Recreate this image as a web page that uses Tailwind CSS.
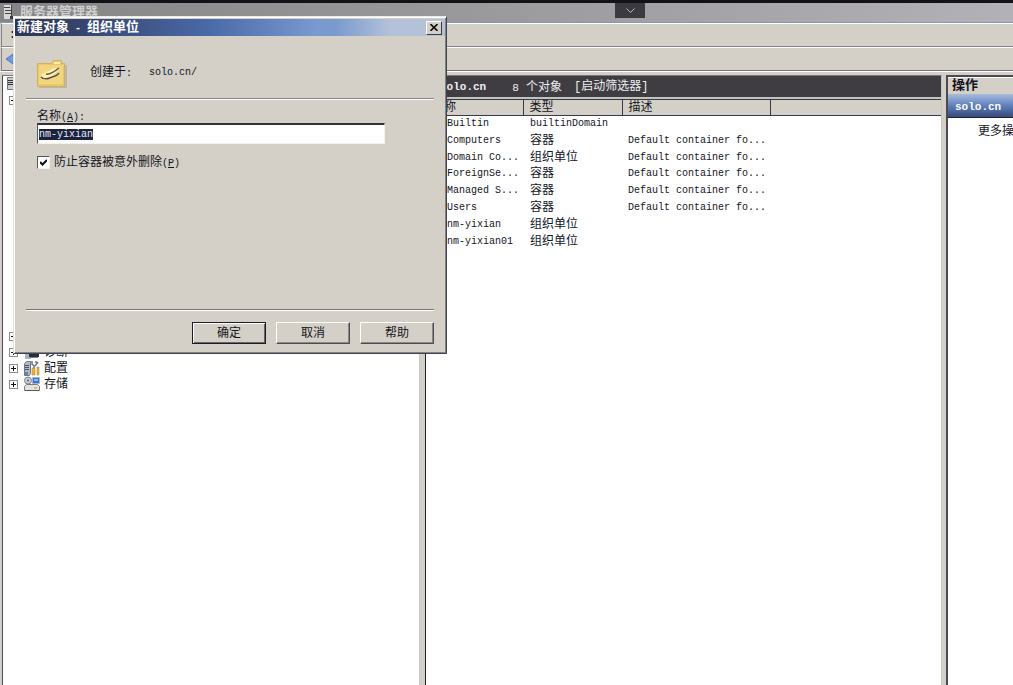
<!DOCTYPE html>
<html lang="zh-CN">
<head>
<meta charset="utf-8">
<title>服务器管理器</title>
<script src="https://cdn.jsdelivr.net/npm/@tailwindcss/browser@4"></script>
</head>
<body class="relative flex h-screen flex-col overflow-hidden bg-[#d4d0c8] font-['Liberation_Mono','Noto_Sans_CJK_SC',monospace] text-xs leading-4 text-[#14141c]">

<header class="relative flex h-[23px] shrink-0 items-center gap-1 border-t-3 border-b border-t-[#111319] border-b-[#8497b5] bg-linear-to-r from-[#858585] via-[#9b9b9e] to-[#b2b1b7] pl-1">
  <svg class="h-4 w-3 shrink-0" viewBox="0 0 12 16" aria-hidden="true"><path fill="#d8d8d8" d="M0 0h7v14H0z"/><path stroke="#444" d="M0 2.500h6M1 5.500h6M1 8.500h6M7.500 0v13"/><path fill="#333a55" d="M6 11h5v3H6z"/></svg>
  <h1 class="text-[13px] leading-4 font-bold whitespace-nowrap text-[#cfcfcf]">服务器管理器</h1>
  <button aria-label="展开" class="absolute top-0 left-[615px] flex h-[15px] w-[30px] items-center justify-center bg-[#3b3a40]">
    <svg class="h-[5px] w-[9px]" viewBox="0 0 9 5" fill="none" stroke="#b8b8bd" aria-hidden="true"><path d="M.5.5l4 4 4-4"/></svg>
  </button>
</header>
<nav class="ml-px flex h-6 shrink-0 items-center border-y border-l border-t-white border-b-[#858585] border-l-[#858585] pl-[7px]">
  <span aria-hidden="true" class="font-bold">:</span>
</nav>
<div class="ml-px flex h-6 shrink-0 items-center border-y border-l border-t-white border-b-[#77717a] border-l-[#858585] pl-[3px]">
  <button aria-label="后退"><svg class="h-3 w-3" viewBox="0 0 12 12" aria-hidden="true"><path fill="#6e9be0" stroke="#557ab8" d="M1 6l7-5v3h4v4H8v3z"/></svg></button>
</div>

<main class="flex min-h-0 flex-1 border-t border-white pt-[3px]">
  <aside class="ml-0.5 w-[418px] shrink-0 border-t border-r border-l border-t-[#77777c] border-r-[#c8c6c1] border-l-[#4b4e62] bg-white">
    <ul class="flex flex-col">
      <li class="flex h-4 items-center pl-1"><svg class="h-[14px] w-3" viewBox="0 0 12 14" aria-hidden="true"><path fill="#c9ccd0" stroke="#777" d="M.5.5h8v12h-8z"/><path stroke="#333" d="M1 3.500h7M1 5.500h7M1 7.500h7"/></svg></li>
      <li class="flex h-59 items-start pt-1 pl-1.5"><button aria-label="展开角色" class="flex size-[9px] items-center justify-center border border-[#8b8b8b] bg-white"><svg class="size-[5px]" viewBox="0 0 5 5" stroke="#111"><path d="M0 2.500h5"/></svg></button></li>
      <li class="flex h-4 items-center pl-1.5"><button aria-label="展开功能" class="flex size-[9px] items-center justify-center border border-[#8b8b8b] bg-white"><svg class="size-[5px]" viewBox="0 0 5 5" stroke="#111"><path d="M0 2.500h5M2.500 0v5"/></svg></button></li>
      <li class="flex h-4 items-center pl-1.5"><button aria-label="展开诊断" class="flex size-[9px] items-center justify-center border border-[#8b8b8b] bg-white"><svg class="size-[5px]" viewBox="0 0 5 5" stroke="#111"><path d="M0 2.500h5M2.500 0v5"/></svg></button>
        <svg class="ml-1.5 size-4" viewBox="0 0 16 16" aria-hidden="true"><path fill="#aab0b8" d="M1 2h6v13H1z"/><path fill="#2a2d3c" d="M5 9h10v4H5z"/><path fill="#777f90" d="M6 13h8v1H6z"/></svg><span class="ml-1 pt-0.5">诊断</span></li>
      <li class="flex h-4 items-center pl-1.5"><button aria-label="展开配置" class="flex size-[9px] items-center justify-center border border-[#8b8b8b] bg-white"><svg class="size-[5px]" viewBox="0 0 5 5" stroke="#111"><path d="M0 2.500h5M2.500 0v5"/></svg></button>
        <svg class="ml-1.5 size-4" viewBox="0 0 16 16" aria-hidden="true"><path fill="#b4bac2" stroke="#6f7885" d="M.5 3.500l2-2h4v12l-1 2h-5z"/><path stroke="#4d5666" d="M1 5.500h4M1 7.500h4M1 9.500h4"/><path fill="#5c82bf" d="M1 12h3v3H1z"/><path fill="none" stroke="#707887" stroke-width="1.500" d="M8 1v3l2 2v3M12 1v2M14 2l-3 4"/><path fill="#e5b53c" stroke="#a97f26" stroke-width=".5" d="M8 8h3v7H8zM13 7h2v8h-2z"/></svg><span class="ml-1 pt-0.5">配置</span></li>
      <li class="flex h-4 items-center pl-1.5"><button aria-label="展开存储" class="flex size-[9px] items-center justify-center border border-[#8b8b8b] bg-white"><svg class="size-[5px]" viewBox="0 0 5 5" stroke="#111"><path d="M0 2.500h5M2.500 0v5"/></svg></button>
        <svg class="ml-1.5 size-4" viewBox="0 0 16 16" aria-hidden="true"><circle cx="4" cy="4.500" r="3.500" fill="#c9ced4" stroke="#7b828c"/><circle cx="4" cy="4.500" r="1" fill="#555"/><path fill="#3c72c8" stroke="#a2b5d4" d="M8.500 1.500h7v6h-7z"/><path fill="#90b8f0" d="M10 3h4v2h-4z"/><path fill="#e2e2e0" stroke="#777b82" d="M.5 10.500l2-2h11l2 2v4H.5z"/><path stroke="#555b66" d="M1 14.500h14"/><path fill="#e1c043" d="M10 11h3v2h-3z"/></svg><span class="ml-1 pt-0.5">存储</span></li>
    </ul>
  </aside>

  <section class="ml-[5px] flex min-w-0 flex-1 flex-col border-t border-r border-l border-t-[#77777c] border-r-[#c8c6c1] border-l-[#20222e] bg-white">
    <div class="flex h-[21px] shrink-0 items-center overflow-hidden bg-[#3f3d42] pl-[14px] whitespace-nowrap text-[#eeeef0]">
      <b class="text-[11px] font-bold">solo.cn</b>
      <span class="ml-[26px] pt-0.5"><span class="text-[11px]">8</span> 个对象</span>
      <span class="ml-[12px]">[启动筛选器]</span>
    </div>
    <div class="h-0.5 shrink-0 bg-[#c4c2bd]"></div>
    <table class="w-full table-fixed border-collapse text-left whitespace-nowrap">
      <colgroup><col class="w-[97px]"><col class="w-[99px]"><col class="w-[148px]"><col></colgroup>
      <thead class="bg-[#d4d0c8]">
        <tr class="h-4 border-y border-[#363a4c]">
          <th class="border-r border-[#363a4c] p-0 pt-px pl-[6px] leading-[14px] font-normal">名称</th>
          <th class="border-r border-[#363a4c] p-0 pt-px pl-[6px] leading-[14px] font-normal">类型</th>
          <th class="border-r border-[#363a4c] p-0 pt-px pl-[6px] leading-[14px] font-normal">描述</th>
          <th class="p-0"></th>
        </tr>
      </thead>
      <tbody>
        <tr class="h-[17px]"><td class="p-0 pl-[21px] text-[10px]">Builtin</td><td class="p-0 pl-[7px] text-[10px]">builtinDomain</td><td></td><td></td></tr>
        <tr class="h-[17px]"><td class="p-0 pl-[21px] text-[10px]">Computers</td><td class="p-0 pl-[7px]">容器</td><td class="p-0 pl-1.5 text-[10px]">Default container fo...</td><td></td></tr>
        <tr class="h-4"><td class="p-0 pl-[21px] text-[10px]">Domain Co...</td><td class="p-0 pl-[7px]">组织单位</td><td class="p-0 pl-1.5 text-[10px]">Default container fo...</td><td></td></tr>
        <tr class="h-[17px]"><td class="p-0 pl-[21px] text-[10px]">ForeignSe...</td><td class="p-0 pl-[7px]">容器</td><td class="p-0 pl-1.5 text-[10px]">Default container fo...</td><td></td></tr>
        <tr class="h-[17px]"><td class="p-0 pl-[21px] text-[10px]">Managed S...</td><td class="p-0 pl-[7px]">容器</td><td class="p-0 pl-1.5 text-[10px]">Default container fo...</td><td></td></tr>
        <tr class="h-[17px]"><td class="p-0 pl-[21px] text-[10px]">Users</td><td class="p-0 pl-[7px]">容器</td><td class="p-0 pl-1.5 text-[10px]">Default container fo...</td><td></td></tr>
        <tr class="h-[17px]"><td class="p-0 pl-[21px] text-[10px]">nm-yixian</td><td class="p-0 pl-[7px]">组织单位</td><td></td><td></td></tr>
        <tr class="h-4"><td class="p-0 pl-[21px] text-[10px]">nm-yixian01</td><td class="p-0 pl-[7px]">组织单位</td><td></td><td></td></tr>
      </tbody>
    </table>
  </section>

  <aside class="ml-1 w-[67px] shrink-0 overflow-hidden border-t-2 border-l-2 border-[#4a4a50] bg-white whitespace-nowrap">
    <h2 class="h-[17px] border-t border-white bg-[#d4d0c8] pl-1 text-[13px] leading-4 font-bold">操作</h2>
    <div class="flex h-6 items-center border-b border-[#1c2138] bg-linear-to-b from-[#a9bbdc] via-[#5f80bd] to-[#384a7c] pt-0.5 pl-[7px] text-[11px] font-bold text-white">solo.cn</div>
    <a href="#" class="mt-1.5 block pl-[30px]">更多操作</a>
  </aside>
</main>

<form role="dialog" aria-labelledby="dialog-title" class="absolute top-4 left-[13px] flex h-[338px] w-[434px] flex-col border border-t-[#ecebe6] border-r-[#3f4454] border-b-[#3f4454] border-l-[#e4e2dd] bg-[#d4d0c8] p-px shadow-[inset_1px_1px_0_#fff,inset_-1px_-1px_0_#85837f]">
  <div class="mt-px flex h-[17px] shrink-0 items-center justify-between bg-linear-to-r from-[#2c3454] from-0% via-[#4a69a8] via-45% to-[#7a99cf] to-70% pl-0.5">
    <h2 id="dialog-title" class="pt-0.5 text-[13px] leading-4 font-bold whitespace-pre text-white">新建对象<span class="text-[10px]"> - </span>组织单位</h2>
    <div class="flex h-full w-[110px] items-center justify-end bg-linear-to-r from-[#7a99cf] to-[#b3c2d8] to-50% pr-[3px]">
      <button type="button" aria-label="关闭" class="flex h-[14px] w-4 items-center justify-center border border-t-white border-r-[#3c3c40] border-b-[#3c3c40] border-l-white bg-[#d4d0c8]"><svg class="h-[7px] w-2" viewBox="0 0 8 7" stroke="#111" stroke-width="1.600" aria-hidden="true"><path d="M.5 0l7 7M7.500 0l-7 7"/></svg></button>
    </div>
  </div>
  <div class="mx-[11px] mt-[23px] flex h-[40px] shrink-0 items-start border-b border-[#86868a] pl-[11px] shadow-[0_1px_0_#fff]">
    <svg class="mt-px h-7 w-[30px] shrink-0" viewBox="0 0 30 28" aria-hidden="true"><path fill="#9f9d99" d="M2 5h28v23H2z" opacity=".5"/><path fill="#e9c869" stroke="#d3b25a" d="M.5 3.500h14l2-3h8v3h3v23H.500z"/><path fill="#f0d77f" d="M2 5h24v19H2z"/><path fill="#ffefb0" d="M17 2h6v2h-6z"/><path fill="#fff0b0" d="M4 15l13-7 6 1-10 9-6 2z"/><path fill="none" stroke="#5c564c" stroke-width="1.500" d="M4 17c4 4 8 1 11 0s5-1 7-4M9 14c4 1 8-2 13-6"/></svg>
    <span class="mt-1.5 ml-[23px]">创建于<span class="text-[10px]">:</span></span>
    <span class="mt-1.5 ml-[17px] text-[10px]">solo.cn/</span>
  </div>
  <label for="ou-name" class="mt-2.5 ml-[22px] h-3.5">名称<span class="text-[10px]">(<u>A</u>):</span></label>
  <input id="ou-name" type="text" value="nm-yixian" autocomplete="off" spellcheck="false" class="ml-[22px] h-[21px] w-[348px] shrink-0 border border-t-2 border-t-[#30303a] border-r-[#f3f1ed] border-b-[#f3f1ed] border-l-[#55555d] bg-white px-px text-[10px] outline-none selection:bg-[#1b2240] selection:text-[#e8e8f0]">
  <div class="mt-[9px] ml-[22px] flex items-center gap-1">
    <span class="relative flex size-[13px]">
      <input id="protect" type="checkbox" checked class="peer size-[13px] appearance-none border border-t-[#55555d] border-r-[#f3f1ed] border-b-[#f3f1ed] border-l-[#55555d] bg-white">
      <svg class="pointer-events-none absolute top-[3px] left-[3px] hidden size-[7px] peer-checked:block" viewBox="0 0 7 7" fill="none" stroke="#111" stroke-width="2" aria-hidden="true"><path d="M0 3l2.500 2.500L7 1"/></svg>
    </span>
    <label for="protect" class="pt-0.5">防止容器被意外删除<span class="text-[10px]">(<u>P</u>)</span></label>
  </div>
  <div class="mx-[11px] mt-auto flex justify-end gap-[10px] border-t border-[#77777b] pt-3 pb-2 shadow-[inset_0_1px_0_#fff]">
    <button type="submit" class="h-[22px] w-[74px] border border-[#1b1c26] bg-[#d4d0c8] pt-0.5 shadow-[inset_1px_1px_0_#fff,inset_-1px_-1px_0_#66666c]">确定</button>
    <button type="button" class="h-[22px] w-[74px] border border-t-white border-r-[#4b4c54] border-b-[#4b4c54] border-l-white bg-[#d4d0c8] pt-0.5 shadow-[inset_-1px_-1px_0_#8a8884]">取消</button>
    <button type="button" class="h-[22px] w-[74px] border border-t-white border-r-[#4b4c54] border-b-[#4b4c54] border-l-white bg-[#d4d0c8] pt-0.5 shadow-[inset_-1px_-1px_0_#8a8884]">帮助</button>
  </div>
</form>
<script>
  const nameField = document.getElementById('ou-name');
  nameField.focus();
  nameField.select();
</script>
</body>
</html>
